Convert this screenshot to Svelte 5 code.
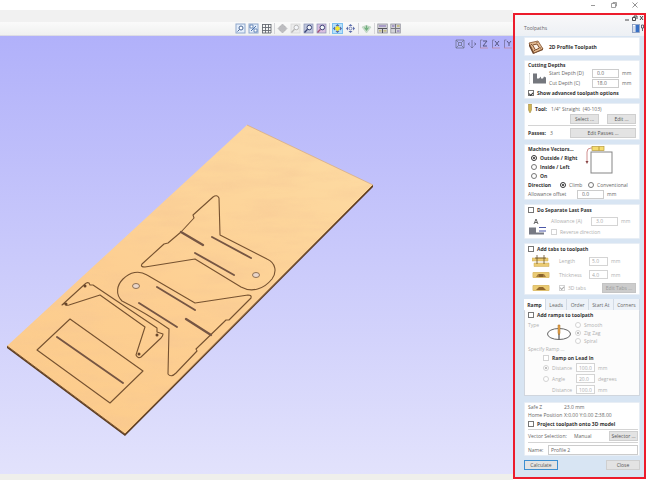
<script>
  let cutSide = $state('outside');
  let direction = $state('climb');
  let startDepth = $state('0.0');
  let cutDepth = $state('18.0');
  let offset = $state('0.0');
  let name = $state('Profile 2');
  let advanced = $state(true);
  const tabs = ['Ramp', 'Leads', 'Order', 'Start At', 'Corners'];
  let activeTab = $state('Ramp');
  const tools = [
    ['zoom-page', 'zoom-drag', 'grid'],
    ['pan', 'zoom-off', 'zoom-all', 'zoom-sel'],
    ['rotate', 'spin'],
    ['shade'],
    ['tile-h', 'tile-v']
  ];
  const views = ['iso', 'plan', 'Z', 'X', 'Y'];
</script>

{#snippet toolIcon(kind)}
  <svg viewBox="0 0 11 11" aria-hidden="true">
    {#if kind === 'zoom-page' || kind === 'zoom-drag'}
      <rect x="1" y="1" width="9" height="9" fill="#e4eefb" stroke="#8fa8cc" />
      {#if kind === 'zoom-page'}
        <circle cx="6" cy="5" r="2" fill="#fff" stroke="#4a6796" /><path d="M4.500 6.500 2.500 8.500" stroke="#4a6796" />
      {:else}
        <path d="M2 2h3v3H2zM6 6h3v3H6z" fill="#fff" stroke="#4f74ac" stroke-width=".8" /><path d="M3 8l5-5" stroke="#4f74ac" />
      {/if}
    {:else if kind === 'grid'}
      <path d="M1.500 1v9M4.500 1v9M7.500 1v9M10 1v9M1 1.500h9M1 4.500h9M1 7.500h9M1 10h9" stroke="#666b73" stroke-width=".9" />
    {:else if kind === 'pan'}
      <path d="M5.500 1 8 3.500H6.500v1h1V3L10 5.500 7.500 8V6.500h-1v1H8L5.500 10 3 7.500h1.500v-1h-1V8L1 5.500 3.500 3v1.500h1v-1H3z" fill="#bcbcc0" stroke="#b4b4b8" stroke-width=".7" />
    {:else if kind.startsWith('zoom')}
      <rect x="1" y="1" width="9" height="9" fill={kind === 'zoom-off' ? '#ececec' : kind === 'zoom-all' ? '#bfc6dc' : '#d9bfe0'} stroke={kind === 'zoom-off' ? '#d5d5d5' : '#8891b5'} stroke-width=".7" />
      <circle cx="6.300" cy="4.500" r="2.300" fill="#f4f6fa" stroke={kind === 'zoom-off' ? '#b8b8b8' : '#3b4676'} />
      <path d="M4.500 6.300 1.500 9.500" stroke={kind === 'zoom-off' ? '#b8b8b8' : kind === 'zoom-sel' ? '#a15478' : '#3b4676'} stroke-width="1.300" />
    {:else if kind === 'rotate'}
      <rect x=".5" y=".5" width="10" height="10" fill="#b5e0fb" stroke="#7cc0f0" />
      <path d="M5.500 1 7.500 3h-4zM5.500 10l2-2h-4zM1 5.500l2-2v4zM10 5.500l-2-2v4z" fill="#4a5fae" />
      <path d="M5.500 2.800 8.200 5.500 5.500 8.200 2.800 5.500z" fill="#f8ea2e" stroke="#a9a13c" stroke-width=".5" />
    {:else if kind === 'spin'}
      <path d="M5.500 1 7.500 3h-4zM5.500 10l2-2h-4zM1 5.500l2-2v4zM10 5.500l-2-2v4z" fill="#5c6caa" />
      <circle cx="5.500" cy="5.500" r="1.500" fill="none" stroke="#7583b8" />
    {:else if kind === 'shade'}
      <path d="M1 4q4-3 9 0L5.500 10z" fill="#c6dcc9" stroke="#b8cfbc" stroke-width=".6" />
      <path d="M5.500 2.500v5M3.500 4.500 5.500 7l2-2.500" fill="none" stroke="#6fae7c" stroke-width="1.200" />
    {:else}
      <rect x=".8" y="1" width="9.500" height="9" fill="#d3d3d8" stroke="#9495a0" stroke-width=".8" />
      {#if kind === 'tile-h'}
        <path d="M1 5.500h9M5.500 6v4" stroke="#55555c" /><path d="M2 3h7" stroke="#9a8ac0" stroke-width="1.500" /><path d="M2 7.800h2.500M6.500 7.800h3" stroke="#c1b76a" stroke-width="1.200" />
      {:else}
        <path d="M5.500 1v9M1 5.500h9" stroke="#77777f" /><path d="M2 3h2.500M7 8h2.500" stroke="#9a8ac0" stroke-width="1.500" /><path d="M7 3h2.500" stroke="#c1b76a" stroke-width="1.500" />
      {/if}
    {/if}
  </svg>
{/snippet}

{#snippet viewIcon(kind)}
  <svg viewBox="0 0 10 10" aria-hidden="true">
    {#if kind === 'iso'}
      <path d="M1 1h8v8H1zM3.500 3.500h3v3h-3zM1 1l2.500 2.500M9 1 6.500 3.500M1 9l2.500-2.500M9 9 6.500 6.500" fill="none" stroke="#6f7590" stroke-width=".8" />
    {:else if kind === 'plan'}
      <path d="M5 1v8M3.500 7.500 5 9l1.500-1.500M2.500 3.500 1 5l1.500 1.500M7.500 3.500 9 5 7.500 6.500M1 5h2M7 5h2" fill="none" stroke="#6d6c98" stroke-width=".8" />
    {:else}
      <path d="M1.500 9V1h2" fill="none" stroke="#7774a0" stroke-width=".8" /><path d="M1 9h8" stroke="#c48ba2" stroke-width=".8" />
      <path d={kind === 'Z' ? 'M4 2h4L4 7h4' : kind === 'X' ? 'M4 2l4 5M8 2 4 7' : 'M4 2l2 2.500L8 2M6 4.500V7'} fill="none" stroke="#55557f" />
    {/if}
  </svg>
{/snippet}

<div class="app">
  <header class="titlebar">
    <button aria-label="Minimize"><svg viewBox="0 0 8 8"><path d="M2 4.500h4" stroke="#999" /></svg></button>
    <button aria-label="Restore"><svg viewBox="0 0 8 8"><path d="M1.500 2.500h4v4h-4zM3 2.500v-1h3.500V5h-1" fill="none" stroke="#888" stroke-width=".8" /></svg></button>
    <button aria-label="Close"><svg viewBox="0 0 8 8"><path d="m1.500 1.500 5 5M6.500 1.500l-5 5" stroke="#777" stroke-width=".8" /></svg></button>
  </header>

  <div class="work">
    <main>
      <div class="strip"></div>
      <div class="toolbar">
        {#each tools as group}
          <div class="group">
            {#each group as kind}<button aria-label={kind}>{@render toolIcon(kind)}</button>{/each}
          </div>
        {/each}
      </div>
      <div class="view">
        <svg class="scene" viewBox="0 36 513 438" preserveAspectRatio="xMinYMin slice" role="img" aria-label="Board preview">
          <defs>
            <linearGradient id="wood" x1="0" y1="1" x2=".7" y2="0">
              <stop offset="0" stop-color="#fccb8a" /><stop offset=".5" stop-color="#fdcf92" /><stop offset="1" stop-color="#fdd9a0" />
            </linearGradient>
            <filter id="grainy" x="0" y="0" width="100%" height="100%">
              <feTurbulence type="fractalNoise" baseFrequency=".02 .09" numOctaves="3" seed="4" />
              <feColorMatrix values="0 0 0 0 .9  0 0 0 0 .55  0 0 0 0 .3  1.200 0 0 0 -.45" />
              <feComposite in2="SourceGraphic" operator="in" />
            </filter>
          </defs>
          <path d="M7 346 125 434 373 185v2L125 436 7 348z" fill="#5d3d22" />
          <path d="M247 125 373 185 125 434 7 346z" fill="url(#wood)" />
          <path d="M247 125 373 185 125 434 7 346z" filter="url(#grainy)" opacity=".6" />
          <path d="M7 346 125 434 373 185" fill="none" stroke="#7b552f" stroke-width="1" />
          <path d="M247 125 373 185" fill="none" stroke="#d8ad83" stroke-width=".8" />
          <g fill="none" stroke="#765230" stroke-width="1.100" stroke-linejoin="round">
            <path d="M62 305 85 284q2-2 4-1l1 2 3 0 64 43v4l6 2q0 2-2 4l-20 19q-3 2-5-2l9-28-45-32-31 10q-4 1-4-2z" />
            <path d="m70 319 73 52-33 32-73-53z" />
            <path d="M122 301c-7-7-5-16 1-22 7-7 16-9 24-4l48 28 53-8q4 0 3 3l-22 22h-3l-30 29 1 2-21 22q-5 5-8 1l1-45q-23-16-47-28z" />
            <path d="m142 264 22-20 4-1 13-11 13-14-1-3 20-18q4-3 6 1l1 37 47 24c9 4 10 13 5 20-8 10-20 14-31 8l-46-28-50 8q-5 0-3-3z" />
          </g>
          <g fill="none" stroke="#765643" stroke-width="1.900" stroke-linecap="round">
            <path d="m57 337 66 46M157 287l38 23M139 303l38 24M195 253l39 22M212 237l39 21" />
            <path d="m181 232 22 13M186 319l25 16" stroke-width="2.300" />
          </g>
          <g fill="#ead6ca" stroke="#82654a" stroke-width=".9">
            <ellipse cx="136" cy="286" rx="3.500" ry="2.500" /><ellipse cx="256" cy="275" rx="3.500" ry="2.500" />
          </g>
          <g fill="#68462b"><circle cx="66" cy="304" r="1.500" /><circle cx="85" cy="286" r="1.500" /><circle cx="157" cy="335" r="1.500" /><circle cx="139" cy="354" r="1.500" /></g>
        </svg>
        <div class="views">{#each views as v}<button aria-label={`View ${v}`}>{@render viewIcon(v)}</button>{/each}</div>
      </div>
      <footer></footer>
    </main>

    <aside>
      <div class="head">
        <div class="mdi">
          <svg viewBox="0 0 20 6" aria-hidden="true"><path d="M1 5h4M8.500 2.500h3v3h-3zM10 2V1h3v3M16 1l3 4M19 1l-3 4" fill="none" stroke="#333" stroke-width=".9" /></svg>
        </div>
        <div class="heading"><h1>Toolpaths</h1>
          <svg viewBox="0 0 12 9" aria-hidden="true"><rect x=".5" y=".5" width="7" height="8" fill="#fff" stroke="#7c91b8" stroke-width=".8" /><path d="M3.500 1h3.500v7H3.500z" fill="#376fc5" /><path d="M1 3h2M1 5h2M1 7h2" stroke="#7c91b8" stroke-width=".6" /><path d="M9.500 1h2v3h-2zM10.500 4v3" fill="none" stroke="#445" stroke-width=".8" /></svg>
        </div>
      </div>

      <div class="cards">
        <section class="card intro">
          <svg viewBox="0 0 16 14" aria-hidden="true"><path d="M1 4v2l4 8 10-4V8z" fill="#613b22" /><path d="m1 3 9-2 5 8-9 4z" fill="#e3bb92" stroke="#82502d" stroke-width=".8" /><path d="m4.500 5 4.500-1 2.500 4-4 2z" fill="#faf0e6" stroke="#82502d" /><path d="m3 4 1 1m5-3 0 1m4 5-1 0m-6 3 1-1" stroke="#613b22" stroke-width=".8" /></svg>
          <h2>2D Profile Toolpath</h2>
        </section>

        <section class="card depths">
          <h3>Cutting Depths</h3>
          <div class="media">
            <svg class="pic" viewBox="0 0 18 14" aria-hidden="true"><path d="M5 2v10h13V6l-2-1-1 2h-2V5l-2 2H9V2z" fill="#74777d" /><path d="M1 2h2M1 12h2M1.500 2v10" stroke="#aaa" stroke-width=".6" stroke-dasharray="1 1" /></svg>
            <div class="lines">
              <div class="row"><label for="sd">Start Depth (D)</label><input id="sd" class="wide" bind:value={startDepth} /><span>mm</span></div>
              <div class="row"><label for="cd">Cut Depth (C)</label><input id="cd" class="wide" bind:value={cutDepth} /><span>mm</span></div>
            </div>
          </div>
          <label class="opt strong"><input type="checkbox" bind:checked={advanced} />Show advanced toolpath options</label>
        </section>

        <section class="card tool">
          <div class="row"><svg class="bit" viewBox="0 0 4 9" aria-hidden="true"><path d="M.500 0h3v6l-1.500 3L.500 6z" fill="#cfb352" stroke="#9b8338" stroke-width=".5" /></svg><b>Tool:</b><span>1/4" Straight&nbsp; (40-103)</span></div>
          <div class="row end"><button class="btn mid">Select ...</button><button class="btn mid">Edit ...</button></div>
          <hr />
          <div class="row"><b>Passes:</b><span class="fill">3</span><button class="btn long">Edit Passes ...</button></div>
        </section>

        <section class="card vectors">
          <div class="split">
            <div class="stack">
              <h3>Machine Vectors...</h3>
              <label class="opt strong"><input type="radio" name="side" value="outside" bind:group={cutSide} />Outside / Right</label>
              <label class="opt strong"><input type="radio" name="side" value="inside" bind:group={cutSide} />Inside / Left</label>
              <label class="opt strong"><input type="radio" name="side" value="on" bind:group={cutSide} />On</label>
            </div>
            <svg viewBox="0 0 32 30" aria-hidden="true"><rect x="7" y="7" width="21" height="21" fill="#fff" stroke="#858585" /><path d="M3 17V7q0-4 4-4h5" fill="none" stroke="#d09090" /><path d="m1.500 16 1.500 3 1.500-3z" fill="#844" /><rect x="8" y="1.500" width="12" height="4" fill="#f5dc70" stroke="#b89b3a" stroke-width=".7" /><path d="M15 1.500v4" stroke="#b89b3a" /></svg>
          </div>
          <div class="row"><b class="dir">Direction</b>
            <label class="opt climb"><input type="radio" name="dir" value="climb" bind:group={direction} />Climb</label>
            <label class="opt"><input type="radio" name="dir" value="conv" bind:group={direction} />Conventional</label></div>
          <div class="row"><label class="offset" for="off">Allowance offset</label><input id="off" class="wide" bind:value={offset} /><span>mm</span></div>
        </section>

        <section class="card last">
          <label class="opt strong"><input type="checkbox" />Do Separate Last Pass</label>
          <div class="media">
            <svg class="pic" viewBox="0 0 20 18" aria-hidden="true"><path d="M6 6 8 1l2 5M7 4.500h2" fill="none" stroke="#555" stroke-width=".9" /><path d="M1 9.500h7v5h8v2H1z" fill="#777a84" /><path d="M11 9.500h7M11 13h7" stroke="#4b57a8" /></svg>
            <div class="lines off">
              <div class="row"><label for="al">Allowance (A)</label><input id="al" class="wide" value="3.0" disabled /><span>mm</span></div>
              <label class="opt"><input type="checkbox" disabled />Reverse direction</label>
            </div>
          </div>
        </section>

        <section class="card bridges">
          <label class="opt strong"><input type="checkbox" />Add tabs to toolpath</label>
          <div class="row off">
            <svg class="tabpic" viewBox="0 0 18 12" aria-hidden="true"><path d="M0 3h16v3H0zM2 8h15v3.500H2z" fill="#ebcb72" stroke="#c8a857" stroke-width=".5" /><path d="M5 0v9M12 0v9M3 3h11" stroke="#6a5126" stroke-width=".8" /></svg>
            <label for="ln">Length</label><input id="ln" value="5.0" disabled /><span>mm</span></div>
          <div class="row off">
            <svg class="tabpic" viewBox="0 0 18 12" aria-hidden="true"><path d="M1 3.500h16v5H1z" fill="#ebcb72" stroke="#dfc070" /><path d="m4 8 2-3h6l2 3z" fill="#a57c3e" /><path d="M8 5v3M10 5v3" stroke="#684919" /></svg>
            <label for="th">Thickness</label><input id="th" value="4.0" disabled /><span>mm</span></div>
          <div class="row off">
            <svg class="tabpic" viewBox="0 0 18 12" aria-hidden="true"><path d="M1 3.500h16v5H1z" fill="#ebcb72" stroke="#dfc070" /><path d="m4 8 3-3h4l3 3z" fill="#91672c" /></svg>
            <label class="opt fill"><input type="checkbox" checked disabled />3D tabs</label><button class="btn gray" disabled>Edit Tabs ...</button></div>
        </section>

        <div class="tabbed">
          <div class="tabs" role="tablist">
            {#each tabs as t}<button role="tab" aria-selected={activeTab === t} class:on={activeTab === t} onclick={() => (activeTab = t)}>{t}</button>{/each}
          </div>
          <section class="card ramp">
            <label class="opt strong"><input type="checkbox" />Add ramps to toolpath</label>
            <div class="media off">
              <span class="type">Type</span>
              <svg viewBox="0 0 26 18" aria-hidden="true"><ellipse cx="13" cy="10" rx="11.500" ry="5.500" fill="#fff" stroke="#666" /><path d="M13 6v9" stroke="#333" /><path d="M12 1h2v8l-1 2-1-2z" fill="#e7a24a" stroke="#a36e27" stroke-width=".5" /></svg>
              <div class="stack">
                <label class="opt"><input type="radio" name="ramp" disabled />Smooth</label>
                <label class="opt"><input type="radio" name="ramp" checked disabled />Zig Zag</label>
                <label class="opt"><input type="radio" name="ramp" disabled />Spiral</label>
              </div>
            </div>
            <div class="off">Specify Ramp ...</div>
            <label class="opt strong in"><input type="checkbox" disabled />Ramp on Lead In</label>
            <div class="row off in"><label class="opt"><input type="radio" name="by" checked disabled />Distance</label><input aria-label="Ramp distance" value="100.0" disabled /><span>mm</span></div>
            <div class="row off in"><label class="opt"><input type="radio" name="by" disabled />Angle</label><input aria-label="Ramp angle" value="20.0" disabled /><span>degrees</span></div>
            <div class="row off in"><label class="opt sub" for="rd">Distance</label><input id="rd" value="100.0" disabled /><span>mm</span></div>
          </section>
        </div>

        <section class="card summary">
          <div class="row"><span class="key">Safe Z</span><span>23.0 mm</span></div>
          <div class="row"><span class="home">Home Position</span><span>X:0.00 Y:0.00 Z:38.00</span></div>
          <label class="opt strong"><input type="checkbox" />Project toolpath onto 3D model</label>
          <hr />
          <div class="row"><span class="sel">Vector Selection:</span><span class="fill">Manual</span><button class="btn mid">Selector ...</button></div>
          <hr />
          <div class="row"><label class="name" for="nm">Name:</label><input id="nm" class="full" bind:value={name} /></div>
        </section>

        <div class="actions"><button class="btn primary">Calculate</button><button class="btn">Close</button></div>
      </div>
    </aside>
  </div>
</div>

<style>
  :global(body) { margin: 0; }
  .app { display: flex; flex-direction: column; min-height: 100vh; background: #fff; color: #666; font: 5px/8px "Open Sans", "Noto Sans", sans-serif; }
  .app * { box-sizing: border-box; }
  button, input { font: inherit; color: inherit; margin: 0; padding: 0; }
  button { border: 0; background: none; }
  svg { display: block; }
  h1, h2, h3 { margin: 0; font-size: 5px; line-height: 8px; }
  h1 { font-weight: 400; }
  h3, b, .strong, h2 { font-weight: 700; color: #333; }
  hr { width: 100%; margin: 0; border: 0; border-top: 1px solid #d4d4d4; align-self: center; }

  .titlebar { display: flex; justify-content: flex-end; gap: 13px; height: 10px; padding: 1px 8px 0 0; }
  .titlebar button, .titlebar svg { width: 8px; height: 8px; }
  .work { flex: 1; display: flex; padding-right: 1px; }
  main { flex: 1; min-width: 0; display: flex; flex-direction: column; }
  .strip { height: 12px; background: #f1f1f1; }
  .toolbar { height: 14px; display: flex; justify-content: center; align-items: center; padding-left: 122px; background: linear-gradient(#fafafa, #f0f1f0); border-bottom: 1px solid #dcdce4; }
  .group { display: flex; gap: 2px; padding: 0 2px; border-right: 1px solid #d5d5d8; }
  .group:last-child { border: 0; }
  .group button, .group svg { width: 11px; height: 11px; }
  .view { flex: 1; position: relative; min-height: 200px; background: linear-gradient(#b1b1fa, #e2e2fc); }
  .scene { position: absolute; inset: 0; width: 100%; height: 100%; }
  .views { position: absolute; top: 3px; right: 0; display: flex; gap: 2px; }
  .views button, .views svg { width: 10px; height: 10px; }
  footer { height: 6px; background: #efefeb; }

  aside { flex: 0 0 133px; display: flex; flex-direction: column; margin: 3px 0 1px; border: 2px solid #ec1c2c; background: #d8e5f3; }
  .head { height: 21px; background: linear-gradient(#f8f8fa, #edf0f4); }
  .mdi { display: flex; justify-content: flex-end; height: 6px; }
  .mdi svg { width: 20px; height: 6px; }
  .heading { display: flex; justify-content: space-between; align-items: center; height: 14px; padding: 0 0 0 9px; }
  .heading svg { width: 12px; height: 9px; }
  .cards { flex: 1; display: flex; flex-direction: column; gap: 4px; padding: 1px 4px 3px 9px; }
  .card { display: grid; padding: 0 3px; background: #fff; border: 1px solid #e8eef5; border-radius: 1px; align-items: center; }
  .row, .media, .opt, .split { display: flex; align-items: center; }
  .row, .opt, h3, .row span, .row label { white-space: nowrap; }
  .fill { flex: 1; }
  .off { color: #b0b0b0; }

  input:not([type]) { width: 19px; height: 9px; padding: 0 2px; border: 1px solid #ccc; background: #fff; margin-right: 3px; border-radius: 0; }
  input.wide:not([type]) { width: 27px; padding: 0 4px; }
  input.full:not([type]) { flex: 1; width: 0; height: 10px; margin: 0; }
  input[type='checkbox'], input[type='radio'] { appearance: none; flex: none; width: 6px; height: 6px; border: 1px solid #777; background: #fff; margin-right: 3px; display: grid; place-items: center; }
  input[type='radio'] { border-radius: 50%; }
  input[type='radio']:checked::after { content: ''; width: 2px; height: 2px; border-radius: 50%; background: currentColor; }
  input[type='radio']:checked:not(:disabled) { border-color: #333; color: #222; }
  input[type='checkbox']:checked::after { content: ''; width: 3px; height: 2px; border: solid currentColor; border-width: 0 0 1px 1px; transform: rotate(-45deg); }
  .app input:disabled { border-color: #d4d4d4; color: #aaa; }
  .btn { width: 34px; height: 10px; line-height: 8px; border: 1px solid #cfcfcf; background: #e3e3e3; color: #555; white-space: nowrap; }
  .btn.mid { width: 29px; }
  .btn.long { width: 66px; }
  .btn.gray { background: #ccc; color: #999; border-color: #c4c4c4; }
  .btn.primary { border-color: #3d8fd1; }

  .intro { display: flex; gap: 5px; height: 19px; }
  .intro svg { width: 16px; height: 14px; }
  .depths { grid-template-rows: 7px 20px 10px; }
  .pic { width: 18px; height: 15px; margin-right: 3px; flex: none; }
  .lines { flex: 1; display: grid; grid-auto-rows: 10px; align-items: center; }
  .depths .lines label { width: 43px; }
  .tool { grid-template-rows: 9px 11px 3px 12px; }
  .bit { width: 4px; height: 9px; margin-right: 3px; }
  .tool b { margin-right: 4px; }
  .end { justify-content: flex-end; gap: 8px; }
  .vectors { grid-template-rows: 35px 9px 10px; }
  .split { justify-content: space-between; align-items: flex-start; }
  .split svg { width: 32px; height: 30px; margin-right: 20px; }
  .stack { display: grid; grid-auto-rows: 9px; align-items: center; }
  .stack .opt { padding-left: 3px; }
  .dir { width: 32px; }
  .climb { width: 28px; }
  .offset { width: 49px; }
  .last { grid-template-rows: 10px 23px; }
  .last .lines { grid-auto-rows: 11px; }
  .last .pic { width: 20px; height: 18px; }
  .last .lines label[for] { width: 40px; }
  .bridges { grid-template-rows: 10px 14px 13px 13px; }
  .tabpic { width: 18px; height: 12px; margin: 0 9px 0 4px; }
  .bridges label[for] { width: 30px; }
  .tabs { display: flex; }
  .tabs button { flex: 1 0 auto; height: 11px; padding: 0 2px; background: #edf2f8; border-right: 1px solid #d3dbe5; }
  .tabs button.on { background: #fff; font-weight: 700; color: #333; }
  .ramp { grid-template-rows: 10px 25px 8px 9px 11px 11px 11px; background: #fcfcfc; border-color: #d0d6de; border-top: 0; }
  .type { width: 18px; align-self: flex-start; }
  .ramp .media svg { width: 26px; height: 18px; }
  .ramp .stack { grid-auto-rows: 8px; }
  .in { padding-left: 15px; }
  .in .opt { width: 33px; }
  .in .sub { padding-left: 9px; }
  .summary { grid-template-rows: 8px 8px 9px 3px 10px 3px 11px; margin-top: 2px; padding-right: 1px; }
  .key { width: 36px; }
  .home { width: 36px; }
  .sel { width: 46px; }
  .name { width: 20px; }
  .actions { display: flex; justify-content: space-between; }
</style>
